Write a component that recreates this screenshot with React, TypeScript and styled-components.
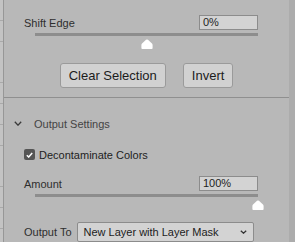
import React from 'react';
import styled, { createGlobalStyle } from 'styled-components';

const GlobalStyle = createGlobalStyle`
  html, body {
    margin: 0;
    padding: 0;
    background: #b8b8b8;
    overflow: hidden;
  }
  body {
    font-family: "Liberation Sans", Arial, sans-serif;
  }
`;

const ThumbIcon: React.FC = () => (
  <svg width="12" height="10" viewBox="0 0 12 10">
    <path
      d="M5 0.8 Q6 0 7 0.8 L11 4.6 Q11.6 5.2 11.6 6 L11.6 9 Q11.6 10 10.6 10 L1.4 10 Q0.4 10 0.4 9 L0.4 6 Q0.4 5.2 1 4.6 Z"
      fill="#ffffff"
    />
  </svg>
);

const Chevron: React.FC<{ w: number; h: number; stroke: string }> = ({ w, h, stroke }) => (
  <svg width={w} height={h} viewBox={`0 0 ${w} ${h}`}>
    <path d={`M0.8 0.8 L${w / 2} ${h - 0.8} L${w - 0.8} 0.8`} fill="none" stroke={stroke} strokeWidth="1.3" />
  </svg>
);

interface SliderProps {
  value: number;
  min: number;
  max: number;
}

const Slider: React.FC<SliderProps> = ({ value, min, max }) => {
  const pct = ((value - min) / (max - min)) * 100;
  return (
    <SliderWrap>
      <Track />
      <Thumb style={{ left: `${pct}%` }}>
        <ThumbIcon />
      </Thumb>
    </SliderWrap>
  );
};

const App: React.FC = () => {
  return (
    <>
      <GlobalStyle />
      <Frame>
        <LeftStrip />
        <Panel>
          <TopSection>
            <FieldRow>
              <Label>Shift Edge</Label>
              <NumberBox>0%</NumberBox>
            </FieldRow>
            <Slider value={0} min={-100} max={100} />
            <ButtonRow>
              <Button>Clear Selection</Button>
              <Button>Invert</Button>
            </ButtonRow>
          </TopSection>

          <OutputSection>
            <SectionHeader>
              <Chevron w={8} h={5} stroke="#3a3a3a" />
              <HeaderTitle>Output Settings</HeaderTitle>
            </SectionHeader>
            <CheckRow>
              <CheckBox>
                <svg width="7" height="6" viewBox="0 0 7 6">
                  <path d="M0.8 3.2 L2.7 5 L6.2 0.9" fill="none" stroke="#fff" strokeWidth="1.5" />
                </svg>
              </CheckBox>
              <CheckLabel>Decontaminate Colors</CheckLabel>
            </CheckRow>
            <FieldRow $top={16}>
              <Label>Amount</Label>
              <NumberBox>100%</NumberBox>
            </FieldRow>
            <Slider value={100} min={0} max={100} />
            <OutputRow>
              <Label>Output To</Label>
              <Select>
                <span>New Layer with Layer Mask</span>
                <Chevron w={7} h={4} stroke="#333" />
              </Select>
            </OutputRow>
          </OutputSection>
        </Panel>
        <RightStrip />
      </Frame>
    </>
  );
};

const Frame = styled.div`
  display: flex;
  width: 295px;
  height: 242px;
  overflow: hidden;
`;

const LeftStrip = styled.div`
  width: 3px;
  flex: none;
  background: repeating-linear-gradient(
    to bottom,
    #c3c3c3 0,
    #c3c3c3 20px,
    #a9a9a9 20px,
    #a9a9a9 20.8px
  );
`;

const Panel = styled.div`
  flex: 1;
  display: flex;
  flex-direction: column;
  border-left: 1px solid #979797;
  background: #b8b8b8;
`;

const RightStrip = styled.div`
  width: 6px;
  flex: none;
  background: #acacac;
`;

const TopSection = styled.div`
  height: 98px;
  box-sizing: border-box;
  padding-top: 15px;
  border-bottom: 1px solid #8f8f8f;
  display: flex;
  flex-direction: column;
`;

const FieldRow = styled.div<{ $top?: number }>`
  display: flex;
  align-items: center;
  justify-content: space-between;
  height: 15px;
  padding: 0 31px 0 20px;
  margin-top: ${(p) => p.$top ?? 0}px;
`;

const Label = styled.span`
  font-size: 11px;
  color: #2e2e2e;
`;

const NumberBox = styled.div`
  width: 59px;
  height: 15px;
  box-sizing: border-box;
  border: 1px solid #8c8c8c;
  background: #d3d3d3;
  font-size: 11px;
  line-height: 13px;
  color: #1e1e1e;
  padding-left: 3px;
`;

const SliderWrap = styled.div`
  position: relative;
  margin: 3px 31px 0 31px;
  height: 16px;
`;

const Track = styled.div`
  height: 3px;
  background: #8d8d8d;
`;

const Thumb = styled.div`
  position: absolute;
  top: 6px;
  width: 12px;
  height: 10px;
  margin-left: -6px;
  line-height: 0;
`;

const ButtonRow = styled.div`
  display: flex;
  justify-content: center;
  gap: 17px;
  margin-top: 14px;
`;

const Button = styled.button`
  height: 25px;
  padding: 0 8px;
  border: 1px solid #9a9a9a;
  border-radius: 3px;
  background: #d1d1d1;
  font-family: "Liberation Sans", Arial, sans-serif;
  font-size: 13px;
  color: #1c1c1c;
`;

const OutputSection = styled.div`
  display: flex;
  flex-direction: column;
  padding-top: 18px;
`;

const SectionHeader = styled.div`
  display: flex;
  align-items: center;
  height: 15px;
  padding-left: 10px;
  gap: 12px;
`;

const HeaderTitle = styled.span`
  font-size: 11px;
  color: #444;
`;

const CheckRow = styled.div`
  display: flex;
  align-items: center;
  margin-top: 18px;
  padding-left: 20px;
  height: 11px;
  gap: 4px;
`;

const CheckBox = styled.div`
  width: 11px;
  height: 11px;
  border-radius: 2px;
  background: #555;
  display: flex;
  align-items: center;
  justify-content: center;
`;

const CheckLabel = styled.span`
  font-size: 11px;
  color: #1e1e1e;
`;

const OutputRow = styled.div`
  display: flex;
  align-items: center;
  gap: 5px;
  margin-top: 12px;
  padding-left: 20px;
`;

const Select = styled.div`
  width: 177px;
  height: 20px;
  box-sizing: border-box;
  border: 1px solid #8c8c8c;
  border-radius: 2px;
  background: #d3d3d3;
  display: flex;
  align-items: center;
  justify-content: space-between;
  padding: 0 6px 0 6px;
  font-size: 11px;
  color: #1c1c1c;
`;

export default App;
